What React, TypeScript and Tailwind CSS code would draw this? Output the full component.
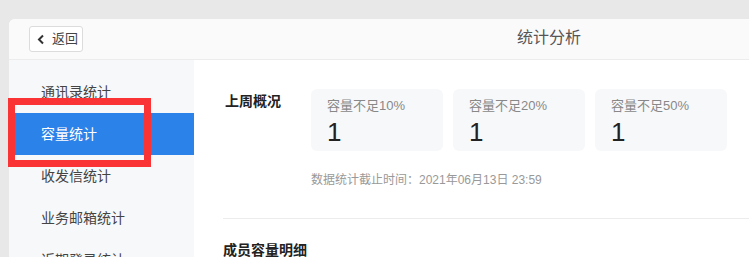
import React from "react";

const font = { fontFamily: '"Liberation Sans", "Noto Sans CJK SC", sans-serif' };

function Card({ label }: { label: string }) {
  return (
    <div className="w-[132px] h-[62px] rounded-[6px] bg-[#f7f8fa] pl-[16px] pt-[8px] flex flex-col">
      <div className="text-[13px] leading-[18px] text-[#888]">{label}</div>
      <div className="text-[26px] leading-[30px] mt-[2px] text-[#222]">1</div>
    </div>
  );
}

export default function App() {
  const items = ["通讯录统计", "容量统计", "收发信统计", "业务邮箱统计", "近期登录统计"];
  return (
    <div style={font} className="w-[749px] h-[257px] overflow-hidden bg-[#e8e8e8] pt-[19px] pl-[9px] relative">
      <div className="w-[900px] h-[400px] bg-white rounded-tl-[6px] overflow-hidden flex flex-col">
        <div className="h-[41px] shrink-0 bg-[#fafafa] border-b border-[#ececec] flex items-center pl-[20px] relative">
          <button className="h-[26px] w-[54px] border border-[#dcdcdc] rounded-[3px] bg-white flex items-center pl-[7px] gap-[7px] text-[13px] text-[#444]">
            <svg width="8" height="11" viewBox="0 0 8 11" fill="none">
              <path d="M6 1.5 L2 5.5 L6 9.5" stroke="#333" strokeWidth="2" />
            </svg>
            <span>返回</span>
          </button>
          <div className="absolute left-[508px] top-[8px] text-[16px] leading-[22px] text-[#555]">统计分析</div>
        </div>
        <div className="flex flex-1">
          <div className="w-[185px] shrink-0 bg-[#f7f8fa] pt-[11px]">
            {items.map((t, i) => (
              <div
                key={t}
                className={
                  "h-[42px] flex items-center pl-[32px] text-[14px] " +
                  (i === 1 ? "bg-[#2b83ea] text-white" : "text-[#444]")
                }
              >
                {t}
              </div>
            ))}
          </div>
          <div className="flex-1 pl-[29px]">
            <div className="flex pt-[29px]">
              <div className="w-[88px] shrink-0 text-[14px] font-bold text-[#222] pt-[2px] pl-[2px]">上周概况</div>
              <div className="flex flex-col">
                <div className="flex gap-[10px]">
                  <Card label="容量不足10%" />
                  <Card label="容量不足20%" />
                  <Card label="容量不足50%" />
                </div>
                <div className="mt-[20px] text-[12px] leading-[18px] text-[#999]">数据统计截止时间：2021年06月13日 23:59</div>
              </div>
            </div>
            <div className="mt-[29px] border-t border-[#ececec]" />
            <div className="mt-[21px] text-[14px] font-bold text-[#222]">成员容量明细</div>
          </div>
        </div>
      </div>
      <div className="absolute left-[8px] top-[98px] w-[143px] h-[69px] border-[7px] border-[#fa3434]" />
    </div>
  );
}
